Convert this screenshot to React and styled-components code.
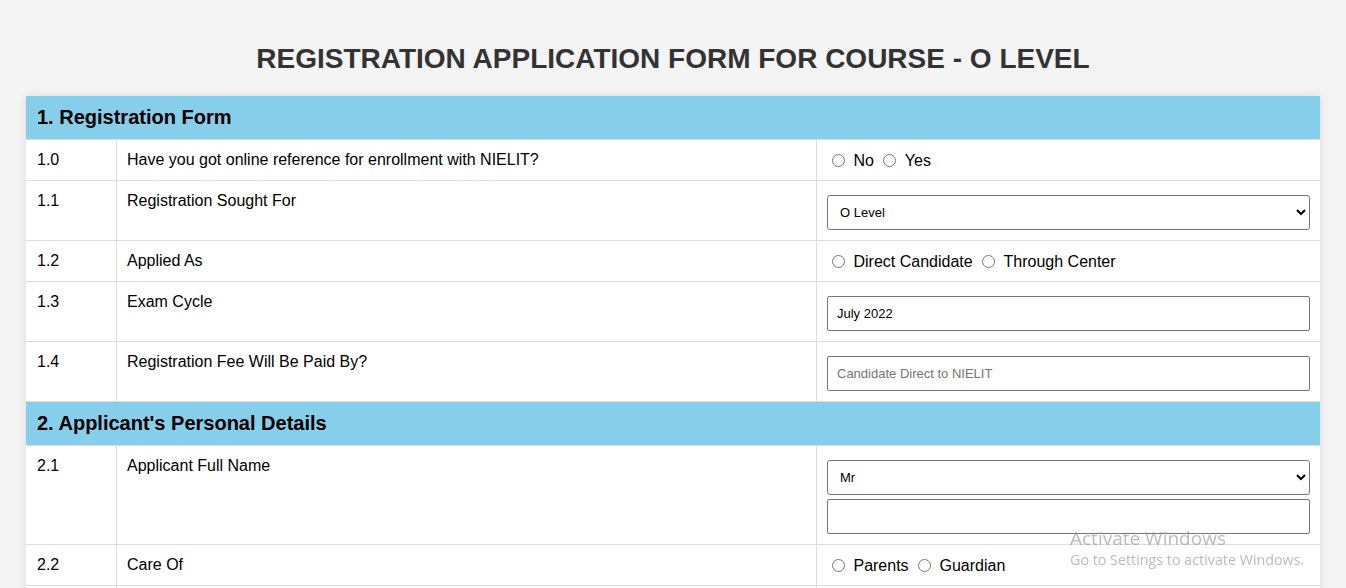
import React from "react";
import styled, { createGlobalStyle } from "styled-components";

const GlobalStyle = createGlobalStyle`
  html, body { margin: 0; padding: 0; overflow: hidden; }
  body {
    background: #f4f4f4;
    font-family: "Liberation Sans", Arial, sans-serif;
    color: #000;
  }
`;

const Page = styled.div`
  padding: 43px 26px 40px;
`;

const Title = styled.h1`
  margin: 0 0 21px;
  font-size: 28px;
  line-height: 32px;
  font-weight: bold;
  color: #333;
  text-align: center;
`;

const Form = styled.div`
  background: #fff;
  box-shadow: 0 0 10px rgba(0, 0, 0, 0.1);
`;

const SectionHeader = styled.div`
  background: #87ceeb;
  padding: 10px 11px;
  font-size: 20px;
  line-height: 23px;
  font-weight: bold;
  border-bottom: 1px solid #ddd;
`;

const Row = styled.div`
  display: grid;
  grid-template-columns: 90px 700px 1fr;
  min-height: ${(p) => p.$minHeight || 0}px;
  border-bottom: 1px solid #ddd;
`;

const Cell = styled.div`
  padding: ${(p) => (p.$choice ? "11px 10px 9px" : "10px")};
  padding-left: ${(p) => (p.$first ? "11px" : "10px")};
  font-size: 16px;
  line-height: 20px;
  border-left: ${(p) => (p.$first ? "none" : "1px solid #ddd")};
  min-width: 0;
`;

const Field = styled.div`
  display: flex;
  flex-direction: column;
  gap: 4px;
  margin-top: 4px;
`;

const Select = styled.select`
  display: block;
  width: 100%;
  height: 35px;
  box-sizing: border-box;
  border: 1px solid #767676;
  border-radius: 3px;
  background: #fff;
  padding: 0 8px;
  font-family: "Liberation Sans", Arial, sans-serif;
  font-size: 13px;
  color: #000;
`;

const TextInput = styled.input`
  display: block;
  width: 100%;
  height: 35px;
  box-sizing: border-box;
  border: 1px solid #767676;
  border-radius: 2px;
  background: #fff;
  padding: 0 9px;
  font-family: "Liberation Sans", Arial, sans-serif;
  font-size: 13px;
  color: #000;
  &::placeholder { color: #757575; }
`;

const Radio = styled.input.attrs({ type: "radio" })`
  margin: 0 3px 0 5px;
  width: 13px;
  height: 13px;
  vertical-align: -1px;
`;

const RadioLabel = styled.label`
  font-size: 16px;
  margin-left: 1px;
`;

const Watermark = styled.div`
  position: fixed;
  left: 1070px;
  top: 526px;
  color: rgba(150, 150, 150, 0.65);
  font-family: "Open Sans", "Noto Sans", sans-serif;
  pointer-events: none;
`;

const WatermarkTitle = styled.div`
  font-size: 19px;
  line-height: 24px;
`;

const WatermarkSub = styled.div`
  font-size: 14.3px;
  line-height: 20px;
`;

function RadioGroup({ name, options }) {
  return (
    <>
      {options.map((o, i) => (
        <React.Fragment key={o}>
          {i > 0 && " "}
          <Radio name={name} id={`${name}-${i}`} />{" "}
          <RadioLabel htmlFor={`${name}-${i}`}>{o}</RadioLabel>
        </React.Fragment>
      ))}
    </>
  );
}

function FormRow({ no, label, children, minHeight, choice }) {
  return (
    <Row $minHeight={minHeight}>
      <Cell $first>{no}</Cell>
      <Cell>{label}</Cell>
      <Cell $choice={choice}>{children}</Cell>
    </Row>
  );
}

export default function App() {
  return (
    <>
      <GlobalStyle />
      <Page>
        <Title>REGISTRATION APPLICATION FORM FOR COURSE - O LEVEL</Title>
        <Form>
          <SectionHeader>1. Registration Form</SectionHeader>
          <FormRow choice no="1.0" label="Have you got online reference for enrollment with NIELIT?">
            <RadioGroup name="ref" options={["No", "Yes"]} />
          </FormRow>
          <FormRow no="1.1" label="Registration Sought For">
            <Field>
              <Select defaultValue="O Level">
                <option>O Level</option>
                <option>A Level</option>
              </Select>
            </Field>
          </FormRow>
          <FormRow choice no="1.2" label="Applied As">
            <RadioGroup name="applied" options={["Direct Candidate", "Through Center"]} />
          </FormRow>
          <FormRow no="1.3" label="Exam Cycle">
            <Field>
              <TextInput defaultValue="July 2022" readOnly />
            </Field>
          </FormRow>
          <FormRow no="1.4" label="Registration Fee Will Be Paid By?">
            <Field>
              <TextInput placeholder="Candidate Direct to NIELIT" readOnly />
            </Field>
          </FormRow>
          <SectionHeader>2. Applicant's Personal Details</SectionHeader>
          <FormRow no="2.1" label="Applicant Full Name">
            <Field>
              <Select defaultValue="Mr">
                <option>Mr</option>
                <option>Ms</option>
                <option>Mrs</option>
              </Select>
              <TextInput />
            </Field>
          </FormRow>
          <FormRow choice no="2.2" label="Care Of">
            <RadioGroup name="care" options={["Parents", "Guardian"]} />
          </FormRow>
          <FormRow no="" label="" minHeight={40} />
        </Form>
      </Page>
      <Watermark>
        <WatermarkTitle>Activate Windows</WatermarkTitle>
        <WatermarkSub>Go to Settings to activate Windows.</WatermarkSub>
      </Watermark>
    </>
  );
}
